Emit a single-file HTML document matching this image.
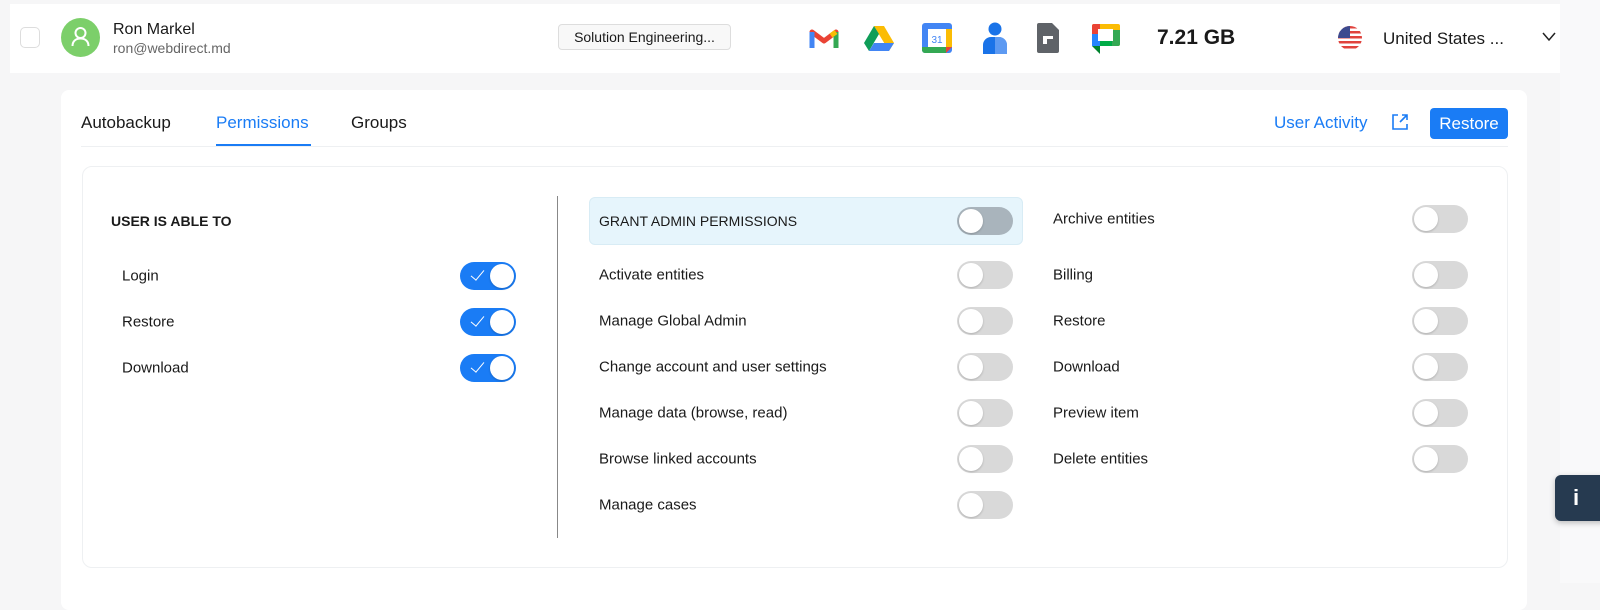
<!DOCTYPE html>
<html><head><meta charset="utf-8"><style>
*{box-sizing:border-box;margin:0;padding:0}
body{width:1600px;height:583px;background:#f6f6f7;font-family:"Liberation Sans",Arial,sans-serif;color:#1a1a1a;position:relative;overflow:hidden}
.abs{position:absolute}
.hdr{left:10px;top:4px;width:1550px;height:69px;background:#fff}
.rstrip{left:1560px;top:0;width:40px;height:583px;background:#f9f9fa}
.card{left:61px;top:90px;width:1466px;height:520px;background:#fff;border-radius:8px}
.panel{left:82px;top:166px;width:1426px;height:402px;border:1px solid #eef0f2;border-radius:10px;background:#fff}
.t{position:absolute;font-size:15px;white-space:nowrap;transform:translateY(-50%)}
.tg{position:absolute;width:56px;height:28px;border-radius:14px;background:#d9d9d9;transform:translateY(-50%)}
.tg::after{content:"";position:absolute;left:2px;top:2px;width:24px;height:24px;border-radius:50%;background:#fff;box-shadow:0 1px 2px rgba(0,0,0,.2)}
.tg.on{background:#1a7cf5}
.tg.on::after{left:30px}
.tg.on::before{content:"";position:absolute;left:14px;top:5px;width:6px;height:12px;border:solid #fff;border-width:0 1.5px 1.5px 0;transform:rotate(40deg)}
.tg.g{background:#a9b4bc}
</style></head><body>
<div class="abs rstrip"></div>
<div class="abs hdr"></div>
<div class="abs" style="left:20px;top:27px;width:20px;height:21px;border:1px solid #ddd;border-radius:5px;background:#fff"></div>
<div class="abs" style="left:61px;top:18px;width:39px;height:39px;border-radius:50%;background:#7ccf6a">
<svg width="39" height="39" viewBox="0 0 39 39"><circle cx="19.5" cy="15" r="5" fill="none" stroke="#fff" stroke-width="2"/><path d="M11.5 28c0-5 3.5-7.5 8-7.5s8 2.5 8 7.5" fill="none" stroke="#fff" stroke-width="2"/></svg></div>
<div class="t" style="left:113px;top:30px;font-size:16px">Ron Markel</div>
<div class="t" style="left:113px;top:48px;font-size:14px;color:#666">ron@webdirect.md</div>
<div class="abs" style="left:558px;top:24px;width:173px;height:26px;border:1px solid #ddd;border-radius:4px;background:#f8f8f8;font-size:14px;line-height:24px;text-align:center">Solution Engineering...</div>
<svg class="abs" style="left:809px;top:27px" width="30" height="22" viewBox="0 0 30 22"><path d="M3 20V5l12 9 12-9v15" fill="none" stroke="#ea4335" stroke-width="5" stroke-linejoin="round"/><path d="M3 21V5" stroke="#4285f4" stroke-width="5"/><path d="M27 21V5" stroke="#34a853" stroke-width="5"/><path d="M27 5l-5 3.5" stroke="#fbbc04" stroke-width="5"/></svg>
<svg class="abs" style="left:864px;top:25px" width="30" height="26" viewBox="0 0 30 26"><path d="M10 1h10l10 17-5 8z" fill="#fbbc04"/><path d="M10 1L0 18l5 8 10-17z" fill="#0f9d58"/><path d="M5 26h20l5-8H10z" fill="#4285f4"/></svg>
<svg class="abs" style="left:922px;top:23px" width="30" height="30" viewBox="0 0 30 30"><rect x="0" y="0" width="30" height="30" rx="3" fill="#4285f4"/><rect x="6" y="6" width="18" height="18" fill="#fff"/><path d="M0 24h24v6H3a3 3 0 0 1-3-3z" fill="#34a853"/><path d="M24 6h6v18h-6z" fill="#fbbc04"/><path d="M24 24h6l-6 6z" fill="#ea4335"/><text x="15" y="20" font-size="10" text-anchor="middle" fill="#4285f4" font-family="Liberation Sans">31</text></svg>
<svg class="abs" style="left:983px;top:22px" width="24" height="32" viewBox="0 0 24 32"><circle cx="12" cy="7" r="6.5" fill="#1a73e8"/><path d="M0 32v-9a8 8 0 0 1 8-8h8a8 8 0 0 1 8 8v9z" fill="#1a73e8"/><path d="M12 15h4a8 8 0 0 1 8 8v9H12z" fill="#8ab4f8" opacity=".6"/></svg>
<svg class="abs" style="left:1037px;top:23px" width="22" height="30" viewBox="0 0 22 30"><path d="M2 0h13l7 7v21a2 2 0 0 1-2 2H2a2 2 0 0 1-2-2V2a2 2 0 0 1 2-2z" fill="#5f6368"/><rect x="6" y="13" width="10" height="3" fill="#fff"/><rect x="6" y="16" width="4" height="5" fill="#fff"/></svg>
<svg class="abs" style="left:1090px;top:22px" width="32" height="32" viewBox="0 0 32 32"><rect x="2" y="2" width="28" height="22" rx="2" fill="#fbbc04"/><path d="M2 12V4a2 2 0 0 1 2-2h6v10z" fill="#ea4335"/><path d="M2 12h8v12H2z" fill="#2684fc"/><path d="M2 24h8v8l-8-8z" fill="#00832d"/><path d="M10 24h18a2 2 0 0 0 2-2V8h-8v16z" fill="#34a853"/><path d="M10 19h12v5H10z" fill="#00ac47"/><rect x="8" y="7" width="15" height="12" fill="#fff"/></svg>
<div class="t" style="left:1157px;top:38px;font-size:21px;font-weight:bold">7.21 GB</div>
<svg class="abs" style="left:1338px;top:26px" width="24" height="24" viewBox="0 0 24 24"><defs><clipPath id="c"><circle cx="12" cy="12" r="12"/></clipPath></defs><g clip-path="url(#c)"><rect width="24" height="24" fill="#fff"/><g fill="#e0433d"><rect y="0" width="24" height="2.5"/><rect y="5" width="24" height="2.5"/><rect y="10" width="24" height="2.5"/><rect y="15" width="24" height="2.5"/><rect y="20" width="24" height="2.5"/></g><rect width="12" height="12" fill="#3c4a8f"/></g></svg>
<div class="t" style="left:1383px;top:39px;font-size:17px">United States ...</div>
<svg class="abs" style="left:1542px;top:32px" width="14" height="10" viewBox="0 0 14 10"><path d="M1 1l6 7 6-7" fill="none" stroke="#222" stroke-width="1.5"/></svg>

<div class="abs card"></div>
<div class="abs" style="left:81px;top:146px;width:1427px;height:1px;background:#eef0f2"></div>
<div class="t" style="left:81px;top:123px;font-size:17px">Autobackup</div>
<div class="t" style="left:216px;top:123px;font-size:17px;color:#1a7cf5">Permissions</div>
<div class="abs" style="left:216px;top:144px;width:95px;height:2px;background:#1a7cf5"></div>
<div class="t" style="left:351px;top:123px;font-size:17px">Groups</div>
<div class="t" style="left:1274px;top:123px;font-size:17px;color:#1a7cf5">User Activity</div>
<svg class="abs" style="left:1391px;top:113px" width="18" height="18" viewBox="0 0 18 18"><path d="M7 2H2v14h14v-5M11 2h5v5M16 2L9 9" fill="none" stroke="#1a7cf5" stroke-width="1.6"/></svg>
<div class="abs" style="left:1430px;top:108px;width:78px;height:31px;background:#1a7cf5;border-radius:4px;color:#fff;font-size:17px;line-height:31px;text-align:center">Restore</div>

<div class="abs panel"></div>
<div class="t" style="left:111px;top:221px;font-size:14px;font-weight:bold">USER IS ABLE TO</div>
<div class="t" style="left:122px;top:276px">Login</div><div class="tg on" style="left:460px;top:276px"></div>
<div class="t" style="left:122px;top:322px">Restore</div><div class="tg on" style="left:460px;top:322px"></div>
<div class="t" style="left:122px;top:368px">Download</div><div class="tg on" style="left:460px;top:368px"></div>
<div class="abs" style="left:557px;top:196px;width:1px;height:342px;background:#888"></div>

<div class="abs" style="left:589px;top:197px;width:434px;height:48px;background:#e6f5fc;border:1px solid #d8ecf5;border-radius:6px"></div>
<div class="t" style="left:599px;top:221px;font-size:14px">GRANT ADMIN PERMISSIONS</div><div class="tg g" style="left:957px;top:221px"></div>
<div class="t" style="left:599px;top:275px">Activate entities</div><div class="tg" style="left:957px;top:275px"></div>
<div class="t" style="left:599px;top:321px">Manage Global Admin</div><div class="tg" style="left:957px;top:321px"></div>
<div class="t" style="left:599px;top:367px">Change account and user settings</div><div class="tg" style="left:957px;top:367px"></div>
<div class="t" style="left:599px;top:413px">Manage data (browse, read)</div><div class="tg" style="left:957px;top:413px"></div>
<div class="t" style="left:599px;top:459px">Browse linked accounts</div><div class="tg" style="left:957px;top:459px"></div>
<div class="t" style="left:599px;top:505px">Manage cases</div><div class="tg" style="left:957px;top:505px"></div>

<div class="t" style="left:1053px;top:219px">Archive entities</div><div class="tg" style="left:1412px;top:219px"></div>
<div class="t" style="left:1053px;top:275px">Billing</div><div class="tg" style="left:1412px;top:275px"></div>
<div class="t" style="left:1053px;top:321px">Restore</div><div class="tg" style="left:1412px;top:321px"></div>
<div class="t" style="left:1053px;top:367px">Download</div><div class="tg" style="left:1412px;top:367px"></div>
<div class="t" style="left:1053px;top:413px">Preview item</div><div class="tg" style="left:1412px;top:413px"></div>
<div class="t" style="left:1053px;top:459px">Delete entities</div><div class="tg" style="left:1412px;top:459px"></div>

<div class="abs" style="left:1555px;top:475px;width:50px;height:46px;background:#263a50;border-radius:6px 0 0 6px;box-shadow:0 2px 6px rgba(0,0,0,.25);color:#fff;font-weight:bold;font-size:22px;line-height:46px;padding-left:18px">i</div>
</body></html>
